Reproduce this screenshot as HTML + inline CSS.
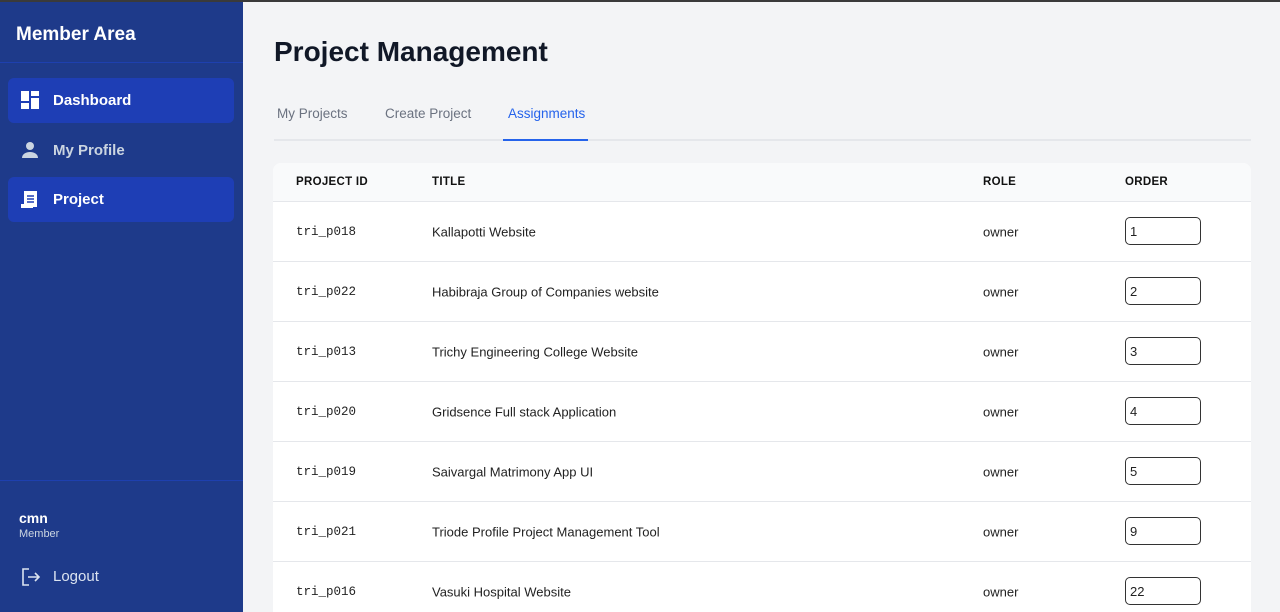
<!DOCTYPE html>
<html style="overflow:hidden;height:612px"><head><style>
*{box-sizing:border-box;margin:0;padding:0}
body{width:1280px;height:612px;overflow:hidden;font-family:"Liberation Sans",sans-serif;background:#f3f4f6;position:relative}
.top{position:absolute;top:0;left:0;width:1280px;height:2px;background:#3a3a3a;z-index:5}
.side{position:absolute;left:0;top:0;width:243px;height:612px;background:#1e3a8a;color:#fff}
.side h1{position:absolute;left:16px;top:24px;font-size:19px;font-weight:bold}
.side .hr{position:absolute;left:0;width:243px;height:1px;background:#1e40af}
.nav{position:absolute;left:8px;width:226px;height:45px;border-radius:6px;font-size:15px;font-weight:bold;display:flex;align-items:center;padding-left:45px}
.nav.act{background:#1e3eb5}
.nav svg{position:absolute;left:13px;top:13px}
.main{position:absolute;left:243px;top:0;right:0;bottom:0}
h2{position:absolute;left:31px;top:36px;font-size:28px;font-weight:bold;color:#111827}
.tabs{position:absolute;left:31px;top:106px;width:977px;height:35px;border-bottom:2px solid #e5e7eb;font-size:13.5px;color:#6b7280}
.tab{position:absolute;top:0;height:35px}
.tab.a{color:#2563eb;border-bottom:2px solid #2563eb}
.card{position:absolute;left:30px;top:163px;width:978px;height:449px;background:#fff;border-radius:8px 8px 0 0;overflow:hidden}
.hd{height:39px;background:#f9fafb;border-bottom:1px solid #e5e7eb;font-size:11.5px;font-weight:bold;letter-spacing:.3px;color:#111;position:relative}
.row{height:60px;border-bottom:1px solid #e5e7eb;position:relative;font-size:13px;color:#222}
.c{position:absolute;top:50%;transform:translateY(-50%)}
.mono{font-family:"Liberation Mono",monospace;font-size:12.5px}
.in{position:absolute;left:852px;top:15px;width:76px;height:28px;border:1.5px solid #333;border-radius:5px;font-size:13px;padding:6px 0 0 4px}
</style></head><body>
<div class="top"></div>
<div class="side">
<h1>Member Area</h1>
<div class="hr" style="top:62px"></div>
<div class="nav act" style="top:78px"><svg width="19" height="19" viewBox="0 0 19 19" fill="#fff"><rect x="0" y="0" width="8" height="10"/><rect x="10" y="0" width="8" height="5"/><rect x="0" y="12" width="8" height="6"/><rect x="10" y="7" width="8" height="11"/></svg>Dashboard</div>
<div class="nav" style="top:128px;color:#cbd5e1"><svg width="18" height="18" viewBox="0 0 18 18" fill="#cbd5e1"><circle cx="9" cy="5" r="4"/><path d="M1 17c0-4 4-6 8-6s8 2 8 6z"/></svg>My Profile</div>
<div class="nav act" style="top:177px"><svg width="18" height="19" viewBox="0 0 18 19"><rect x="3" y="1" width="13" height="16" fill="#fff"/><rect x="0" y="14" width="12" height="4" fill="#fff"/><path d="M6 6h7M6 9h7M6 12h7" stroke="#1e3eb5" stroke-width="1.5"/></svg>Project</div>
<div class="hr" style="top:480px"></div>
<div style="position:absolute;left:19px;top:510px;font-size:14px;font-weight:bold">cmn</div>
<div style="position:absolute;left:19px;top:528px;font-size:11px;color:#cbd5e1">Member</div>
<div class="nav" style="top:554px;color:#dbe3f0;font-weight:normal"><svg width="20" height="20" viewBox="0 0 20 20" fill="none" stroke="#dbe3f0" stroke-width="1.6"><path d="M8 2H2v16h6M7 10h11M14 6l4 4-4 4"/></svg>Logout</div>
</div>
<div class="main">
<h2>Project Management</h2>
<div class="tabs">
<div class="tab" style="left:3px">My Projects</div>
<div class="tab" style="left:111px">Create Project</div>
<div class="tab a" style="left:229px;width:85px;padding-left:5px">Assignments</div>
</div>
<div class="card">
<div class="hd"><span class="c" style="left:23px">PROJECT ID</span><span class="c" style="left:159px">TITLE</span><span class="c" style="left:710px">ROLE</span><span class="c" style="left:852px">ORDER</span></div>
<div class="row"><span class="c mono" style="left:23px">tri_p018</span><span class="c" style="left:159px">Kallapotti Website</span><span class="c" style="left:710px">owner</span><div class="in">1</div></div>
<div class="row"><span class="c mono" style="left:23px">tri_p022</span><span class="c" style="left:159px">Habibraja Group of Companies website</span><span class="c" style="left:710px">owner</span><div class="in">2</div></div>
<div class="row"><span class="c mono" style="left:23px">tri_p013</span><span class="c" style="left:159px">Trichy Engineering College Website</span><span class="c" style="left:710px">owner</span><div class="in">3</div></div>
<div class="row"><span class="c mono" style="left:23px">tri_p020</span><span class="c" style="left:159px">Gridsence Full stack Application</span><span class="c" style="left:710px">owner</span><div class="in">4</div></div>
<div class="row"><span class="c mono" style="left:23px">tri_p019</span><span class="c" style="left:159px">Saivargal Matrimony App UI</span><span class="c" style="left:710px">owner</span><div class="in">5</div></div>
<div class="row"><span class="c mono" style="left:23px">tri_p021</span><span class="c" style="left:159px">Triode Profile Project Management Tool</span><span class="c" style="left:710px">owner</span><div class="in">9</div></div>
<div class="row"><span class="c mono" style="left:23px">tri_p016</span><span class="c" style="left:159px">Vasuki Hospital Website</span><span class="c" style="left:710px">owner</span><div class="in">22</div></div>
</div>
</div>
</body></html>
